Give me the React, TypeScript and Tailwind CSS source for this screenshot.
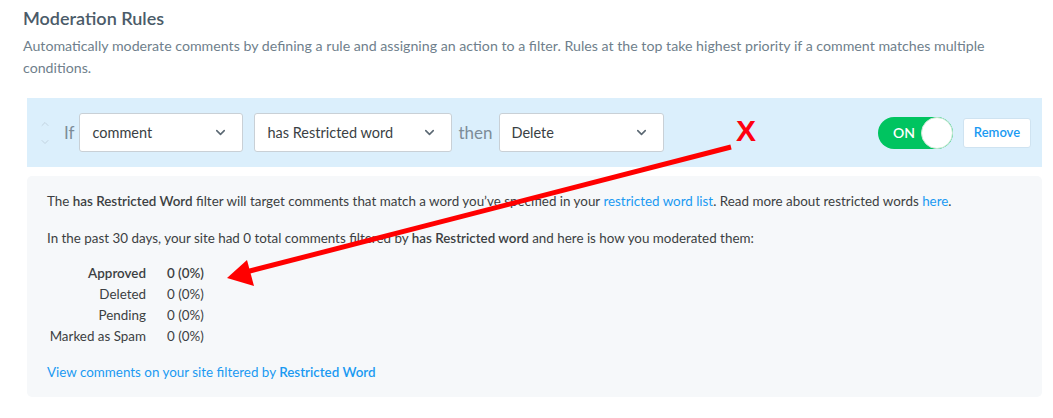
import { ChevronDown, ChevronUp } from 'lucide-react'

const STATS = [
  { label: 'Approved', value: '0 (0%)', bold: true },
  { label: 'Deleted', value: '0 (0%)' },
  { label: 'Pending', value: '0 (0%)' },
  { label: 'Marked as Spam', value: '0 (0%)' },
]

function Select({ value, width }: { value: string; width: string }) {
  return (
    <div
      className={`${width} h-[39px] flex items-center justify-between pl-[12px] pr-[14px] bg-white border border-[#c9d0d6] rounded-[3px] text-[14.5px] text-[#3a3f44]`}
    >
      <span>{value}</span>
      <ChevronDown size={15} strokeWidth={2.5} className="text-[#5b6873]" />
    </div>
  )
}

export default function App() {
  return (
    <div className="relative w-[1053px] h-[418px] bg-white font-['Lato','Noto_Sans',sans-serif] overflow-hidden">
      <div className="px-[23px] pt-[7px]">
        <h2 className="text-[18px] leading-[22px] font-semibold text-[#4b5b69]">Moderation Rules</h2>
        <p className="mt-[6px] text-[14.2px] leading-[22px] text-[#6f7f8c]">
          Automatically moderate comments by defining a rule and assigning an action to a filter. Rules at the top take highest priority if a comment matches multiple
          <br />
          conditions.
        </p>
      </div>

      <div className="ml-[27px] mr-[11px] mt-[19px] h-[69px] bg-[#dbeffc] flex items-center pl-[12px] pr-[11px]">
        <div className="flex flex-col items-center w-[12px] text-[#b9c9d5] gap-[6px]">
          <ChevronUp size={12} strokeWidth={1.5} />
          <ChevronDown size={12} strokeWidth={1.5} />
        </div>
        <span className="ml-[13px] mr-[5px] text-[17px] text-[#7d8c98]">If</span>
        <Select value="comment" width="w-[164px]" />
        <div className="w-[11px]" />
        <Select value="has Restricted word" width="w-[198px]" />
        <span className="mx-[6px] text-[17px] text-[#7d8c98]">then</span>
        <Select value="Delete" width="w-[165px]" />

        <div className="ml-auto flex items-center gap-[10px]">
          <div className="w-[75px] h-[32px] rounded-full bg-[#00c460] flex items-center justify-between pl-[15px]">
            <span className="text-white text-[14px] font-semibold">ON</span>
            <span className="w-[32px] h-[32px] rounded-full bg-white border border-[#c8e8d4]" />
          </div>
          <button className="w-[68px] h-[30px] bg-white border border-[#cfe3f1] rounded-[3px] text-[13px] font-semibold text-[#1a9af2]">
            Remove
          </button>
        </div>
      </div>

      <div className="ml-[27px] mr-[11px] mt-[9px] rounded-[5px] bg-[#f6f8fa] px-[20px] pt-[15px] pb-[14px] text-[13.4px] leading-[21px] text-[#3c3f42]">
        <p>
          The <b className="font-semibold">has Restricted Word</b> filter will target comments that match a word you’ve specified in your{' '}
          <a className="text-[#1a9af2]">restricted word list</a>. Read more about restricted words{' '}
          <a className="text-[#1a9af2]">here</a>.
        </p>
        <p className="mt-[16px]">
          In the past 30 days, your site had 0 total comments filtered by <b className="font-semibold">has Restricted word</b> and here is how you moderated them:
        </p>
        <div className="mt-[14px] grid grid-cols-[99px_auto] gap-x-[21px] w-fit">
          {STATS.map((s) => (
            <div key={s.label} className="contents">
              <span className={`text-right whitespace-nowrap ${s.bold ? 'font-semibold' : ''}`}>{s.label}</span>
              <span className={s.bold ? 'font-semibold' : ''}>{s.value}</span>
            </div>
          ))}
        </div>
        <p className="mt-[15px] text-[#1a9af2]">
          View comments on your site filtered by <b className="font-semibold">Restricted Word</b>
        </p>
      </div>

      <svg className="absolute inset-0 pointer-events-none" width="1053" height="418">
        <line x1="731" y1="147" x2="246" y2="272" stroke="#ff0000" strokeWidth="5" />
        <polygon points="227,278 247,260 254,286" fill="#ff0000" />
      </svg>
      <span className="absolute left-[736px] top-[114px] text-[30px] leading-[34px] font-bold text-[#ff0010] font-['Liberation_Sans',sans-serif]">
        X
      </span>
    </div>
  )
}
